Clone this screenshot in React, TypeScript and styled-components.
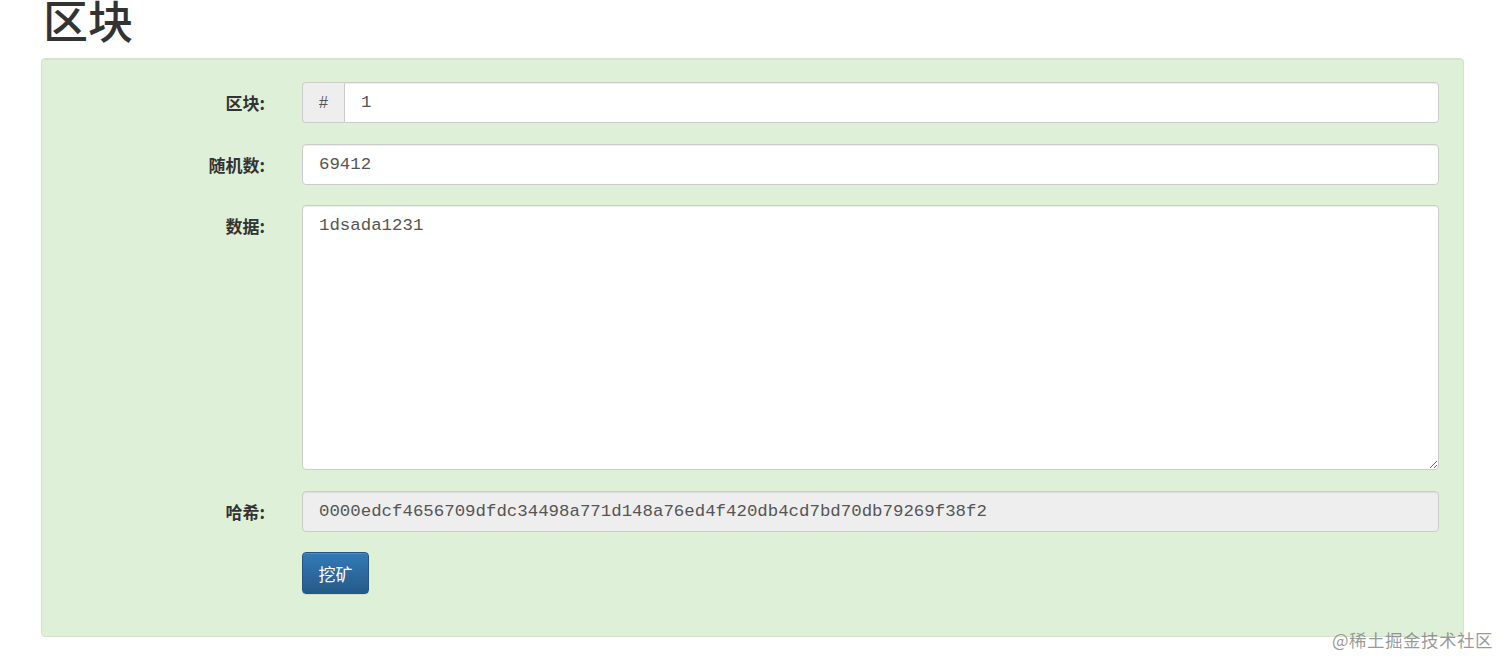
import React from "react";
import styled, { createGlobalStyle } from "styled-components";

const Global = createGlobalStyle`
  html, body { margin: 0; padding: 0; background: #fff; }
  body { font-family: "Helvetica Neue", "Liberation Sans", "Noto Sans CJK SC", sans-serif; color: #333; overflow: hidden; }
`;

const Page = styled.div`
  padding: 0 48px 0 41px;
  position: relative;
  height: 669px;
  box-sizing: border-box;
`;

const Title = styled.h1`
  margin: -7px 0 0 2px;
  height: 65px;
  font-size: 45px;
  line-height: 54px;
  font-weight: 500;
  color: #333;
  font-family: "Noto Sans CJK SC", sans-serif;
`;

const Well = styled.div`
  background: #dff0d8;
  border: 1px solid #d3e3cc;
  border-radius: 4px;
  box-shadow: inset 0 1px 1px rgba(0, 0, 0, 0.05);
  padding: 23px 24px 42px 0;
  display: grid;
  grid-template-columns: 223px 1fr;
  column-gap: 37px;
  row-gap: 20.5px;
  align-items: start;
`;

const Label = styled.label`
  text-align: right;
  font-family: "Noto Sans CJK SC", sans-serif;
  font-weight: 700;
  font-size: 17px;
  line-height: 41px;
  color: #333;
`;

const Group = styled.div`
  display: flex;
  height: 41px;
`;

const Addon = styled.span`
  width: 41px;
  display: flex;
  align-items: center;
  justify-content: center;
  background: #eee;
  border: 1px solid #ccc;
  border-right: none;
  border-radius: 4px 0 0 4px;
  color: #555;
  font-family: "Liberation Sans", sans-serif;
  font-size: 16px;
`;

const Field = styled.input<{ $grouped?: boolean; $readOnly?: boolean }>`
  flex: 1;
  width: 100%;
  box-sizing: border-box;
  height: 41px;
  padding: 0 16px;
  border: 1px solid #ccc;
  border-radius: ${(p) => (p.$grouped ? "0 4px 4px 0" : "4px")};
  background: ${(p) => (p.$readOnly ? "#eee" : "#fff")};
  box-shadow: inset 0 1px 1px rgba(0, 0, 0, 0.075);
  color: #555;
  font-family: "Liberation Mono", "Courier New", monospace;
  font-size: 17.4px;
  outline: none;
`;

const Area = styled.textarea`
  display: block;
  width: 100%;
  box-sizing: border-box;
  height: 265px;
  padding: 8px 16px;
  border: 1px solid #ccc;
  border-radius: 4px;
  background: #fff;
  box-shadow: inset 0 1px 1px rgba(0, 0, 0, 0.075);
  color: #555;
  font-family: "Liberation Mono", "Courier New", monospace;
  font-size: 17.4px;
  line-height: 24px;
  resize: vertical;
  outline: none;
`;

const Button = styled.button`
  width: 67px;
  height: 42px;
  border: 1px solid #245580;
  border-radius: 4px;
  background: linear-gradient(to bottom, #337ab7 0%, #265a88 100%);
  color: #fff;
  font-family: "Noto Sans CJK SC", sans-serif;
  font-size: 17px;
  box-shadow: inset 0 1px 0 rgba(255, 255, 255, 0.15), 0 1px 1px rgba(0, 0, 0, 0.075);
  cursor: pointer;
`;

const Watermark = styled.div`
  position: absolute;
  right: 19px;
  bottom: 10px;
  font-family: "Noto Sans CJK SC", sans-serif;
  font-size: 17.5px;
  color: rgba(120, 120, 120, 0.75);
  letter-spacing: 0.5px;
`;

export default function App() {
  return (
    <>
      <Global />
      <Page>
        <Title>区块</Title>
        <Well>
          <Label>区块:</Label>
          <Group>
            <Addon>#</Addon>
            <Field $grouped defaultValue="1" />
          </Group>
          <Label>随机数:</Label>
          <Field defaultValue="69412" />
          <Label>数据:</Label>
          <Area defaultValue="1dsada1231" />
          <Label>哈希:</Label>
          <Field $readOnly readOnly defaultValue="0000edcf4656709dfdc34498a771d148a76ed4f420db4cd7bd70db79269f38f2" />
          <div />
          <div>
            <Button>挖矿</Button>
          </div>
        </Well>
        <Watermark>@稀土掘金技术社区</Watermark>
      </Page>
    </>
  );
}
